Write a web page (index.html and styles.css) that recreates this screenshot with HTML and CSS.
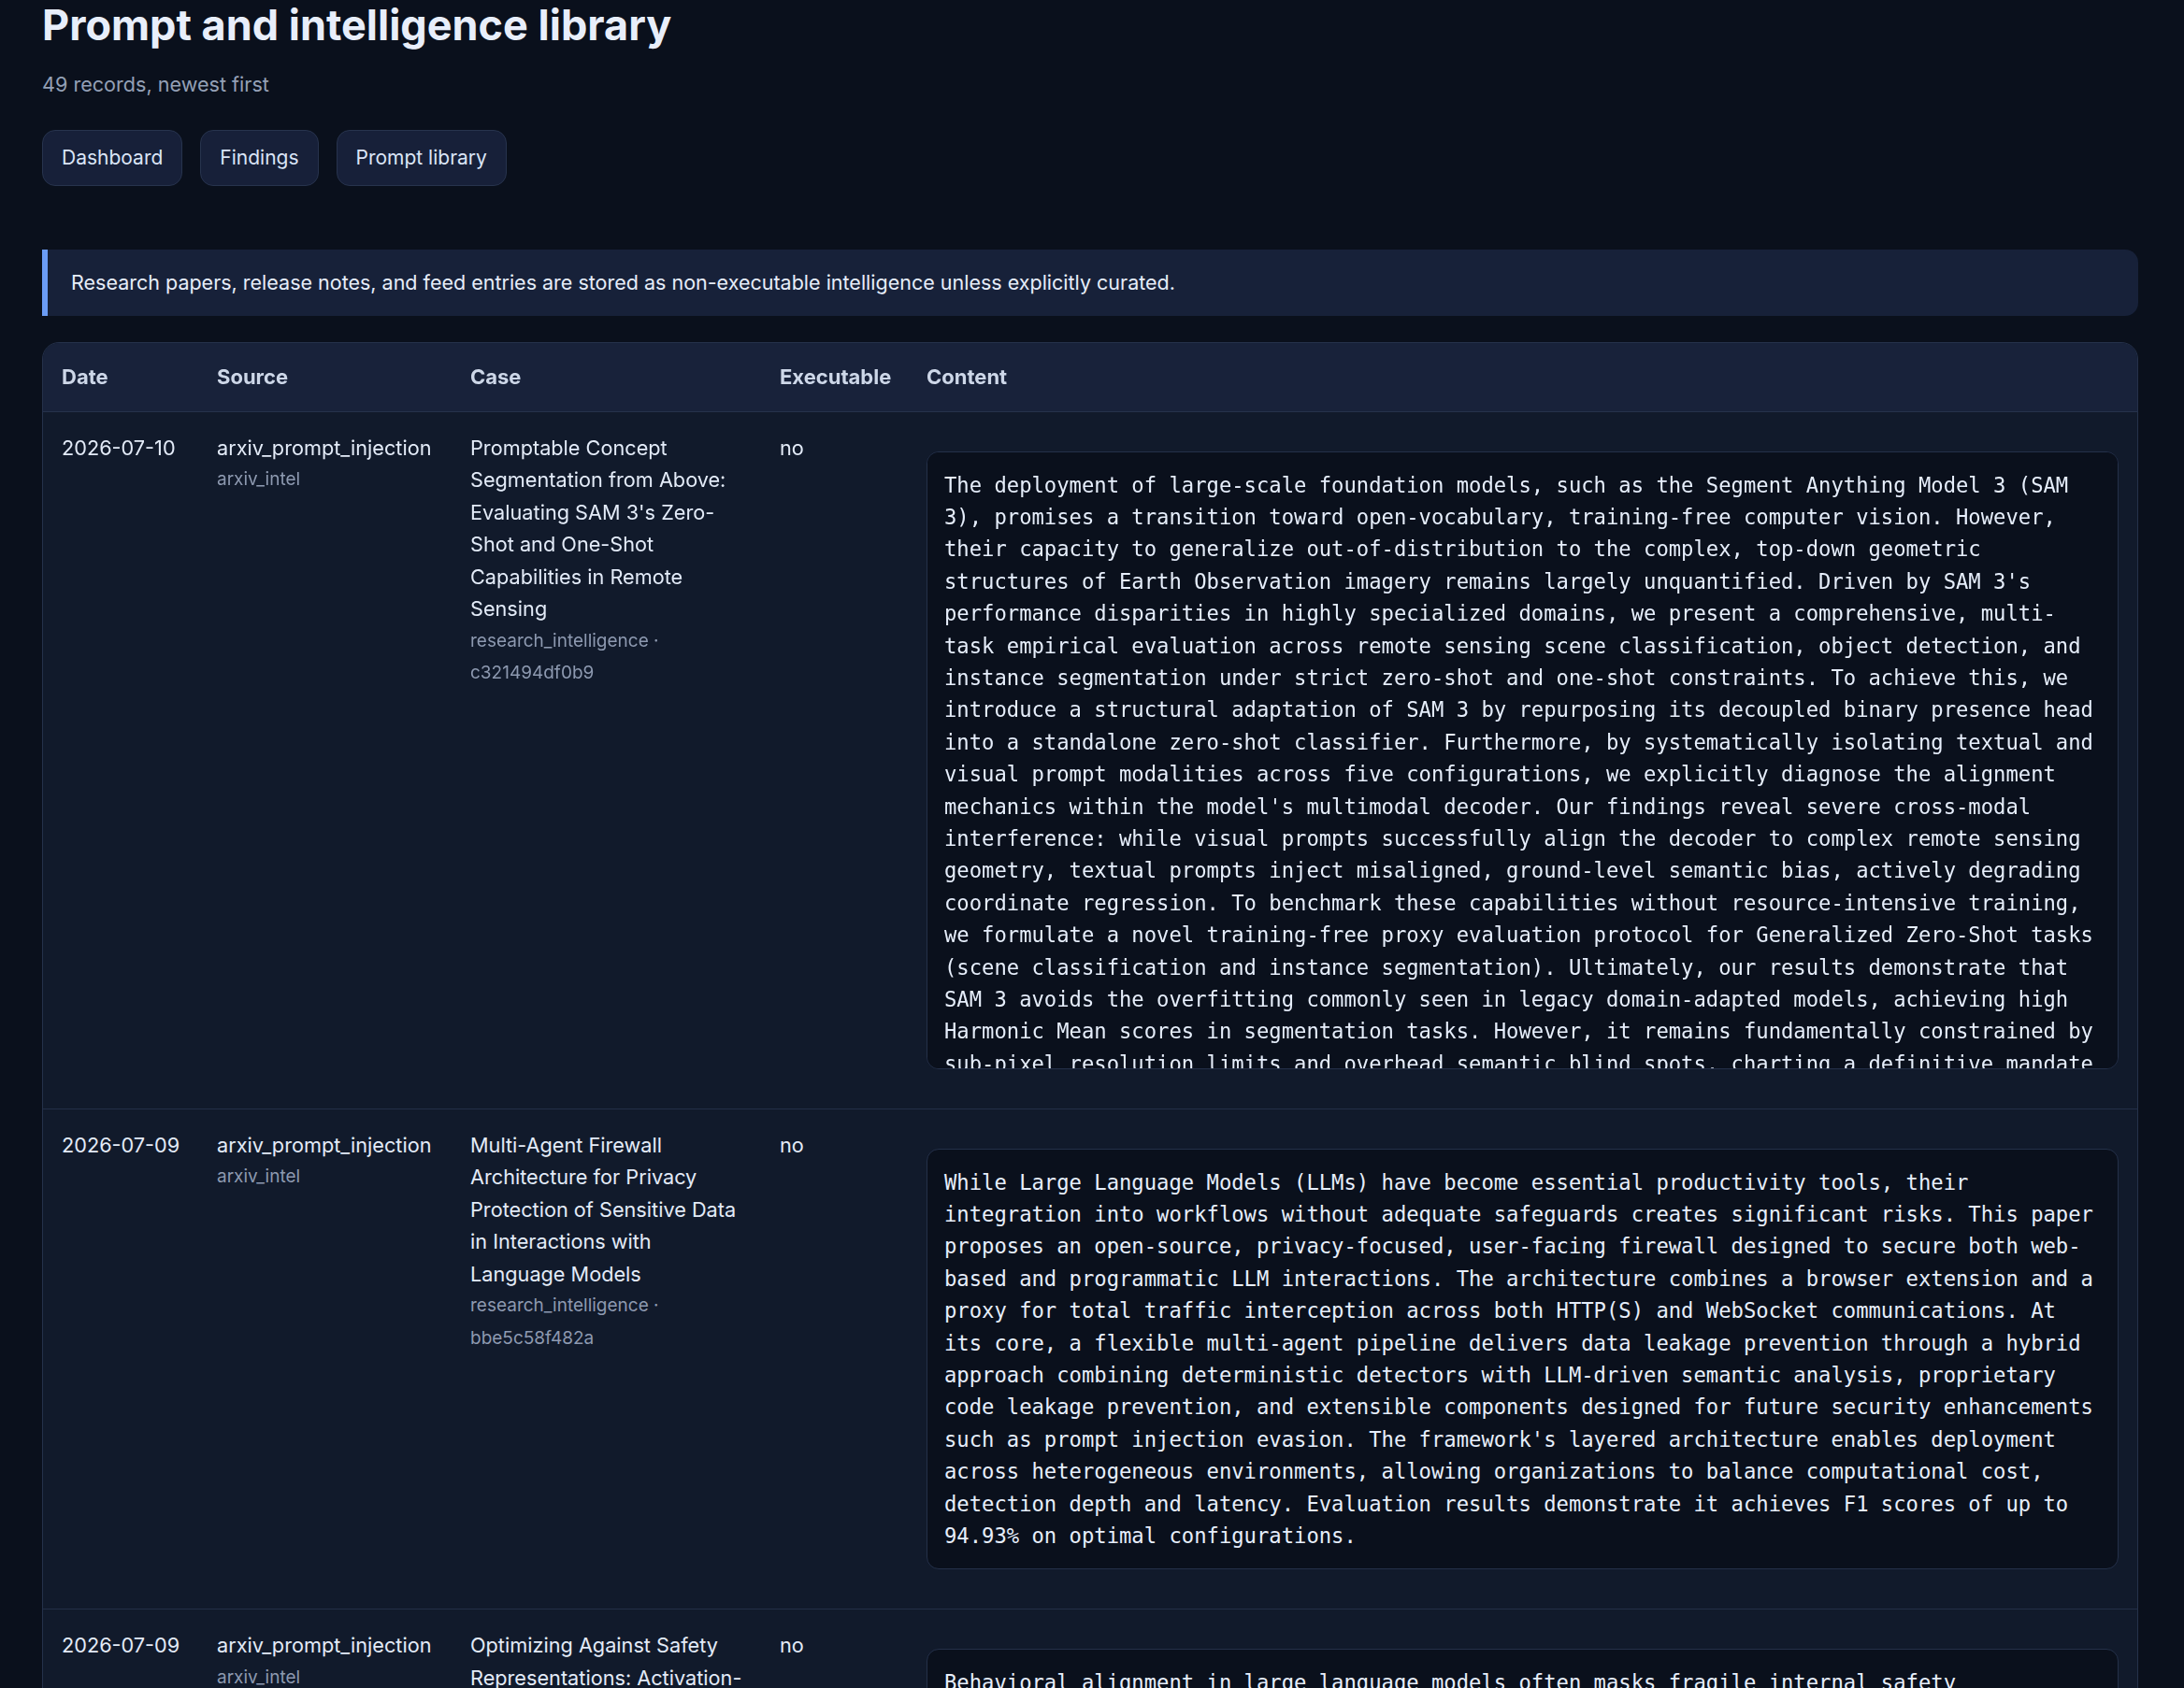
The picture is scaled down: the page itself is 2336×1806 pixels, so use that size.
FILE: index.html
```html
<!DOCTYPE html>
<html lang="en">
<head>
    <meta charset="UTF-8">
    <meta name="viewport" content="width=device-width, initial-scale=1.0">
    <title>Prompt and intelligence library</title>
    <link rel="stylesheet" href="styles.css">
</head>
<body>
    <h1 class="page-title">Prompt and intelligence library</h1>
    <p class="subtitle">49 records, newest first</p>

    <nav class="nav">
        <a class="nav-link" href="#">Dashboard</a>
        <a class="nav-link" href="#">Findings</a>
        <a class="nav-link" href="#">Prompt library</a>
    </nav>

    <div class="notice">Research papers, release notes, and feed entries are stored as non-executable intelligence unless explicitly curated.</div>

    <table class="records">
        <thead>
            <tr>
                <th class="col-date">Date</th>
                <th class="col-source">Source</th>
                <th class="col-case">Case</th>
                <th class="col-exec">Executable</th>
                <th>Content</th>
            </tr>
        </thead>
        <tbody>
            <tr>
                <td class="date">2026-07-10</td>
                <td>arxiv_prompt_injection<span class="sub">arxiv_intel</span></td>
                <td>Promptable Concept Segmentation from Above: Evaluating SAM 3's Zero-Shot and One-Shot Capabilities in Remote Sensing<span class="sub">research_intelligence · c321494df0b9</span></td>
                <td>no</td>
                <td><pre class="content">The deployment of large-scale foundation models, such as the Segment Anything Model 3 (SAM 3), promises a transition toward open-vocabulary, training-free computer vision. However, their capacity to generalize out-of-distribution to the complex, top-down geometric structures of Earth Observation imagery remains largely unquantified. Driven by SAM 3's performance disparities in highly specialized domains, we present a comprehensive, multi-task empirical evaluation across remote sensing scene classification, object detection, and instance segmentation under strict zero-shot and one-shot constraints. To achieve this, we introduce a structural adaptation of SAM 3 by repurposing its decoupled binary presence head into a standalone zero-shot classifier. Furthermore, by systematically isolating textual and visual prompt modalities across five configurations, we explicitly diagnose the alignment mechanics within the model's multimodal decoder. Our findings reveal severe cross-modal interference: while visual prompts successfully align the decoder to complex remote sensing geometry, textual prompts inject misaligned, ground-level semantic bias, actively degrading coordinate regression. To benchmark these capabilities without resource-intensive training, we formulate a novel training-free proxy evaluation protocol for Generalized Zero-Shot tasks (scene classification and instance segmentation). Ultimately, our results demonstrate that SAM 3 avoids the overfitting commonly seen in legacy domain-adapted models, achieving high Harmonic Mean scores in segmentation tasks. However, it remains fundamentally constrained by sub-pixel resolution limits and overhead semantic blind spots, charting a definitive mandate for the next generation of geospatial foundation models.</pre></td>
            </tr>
            <tr>
                <td class="date">2026-07-09</td>
                <td>arxiv_prompt_injection<span class="sub">arxiv_intel</span></td>
                <td>Multi-Agent Firewall Architecture for Privacy Protection of Sensitive Data in Interactions with Language Models<span class="sub">research_intelligence · bbe5c58f482a</span></td>
                <td>no</td>
                <td><pre class="content">While Large Language Models (LLMs) have become essential productivity tools, their integration into workflows without adequate safeguards creates significant risks. This paper proposes an open-source, privacy-focused, user-facing firewall designed to secure both web-based and programmatic LLM interactions. The architecture combines a browser extension and a proxy for total traffic interception across both HTTP(S) and WebSocket communications. At its core, a flexible multi-agent pipeline delivers data leakage prevention through a hybrid approach combining deterministic detectors with LLM-driven semantic analysis, proprietary code leakage prevention, and extensible components designed for future security enhancements such as prompt injection evasion. The framework's layered architecture enables deployment across heterogeneous environments, allowing organizations to balance computational cost, detection depth and latency. Evaluation results demonstrate it achieves F1 scores of up to 94.93% on optimal configurations.</pre></td>
            </tr>
            <tr>
                <td class="date">2026-07-09</td>
                <td>arxiv_prompt_injection<span class="sub">arxiv_intel</span></td>
                <td>Optimizing Against Safety Representations: Activation-Space Attacks on Aligned Language Models<span class="sub">research_intelligence · 7f0a3c1d9b24</span></td>
                <td>no</td>
                <td><pre class="content">Behavioral alignment in large language models often masks fragile internal safety representations. We show that optimizing adversarial inputs directly against these activation-space features yields jailbreaks that transfer across model families.</pre></td>
            </tr>
        </tbody>
    </table>
</body>
</html>
```

FILE: styles.css
```css
body {
    margin: 0;
    padding: 0 49px 40px 45px;
    background-color: #0a101c;
    color: #e3ebf8;
    font-family: Inter, "Noto Sans", sans-serif;
}

.page-title {
    margin: 0;
    font-size: 45px;
    line-height: 53px;
    font-weight: 700;
    color: #e8eefa;
}

.subtitle {
    margin: 22px 0 0;
    font-size: 21.6px;
    line-height: 31.5px;
    color: #94a0b6;
}

.nav {
    display: flex;
    gap: 19px;
    margin-top: 32px;
}

.nav-link {
    padding: 13px 20px;
    border: 1px solid #27334d;
    border-radius: 14px;
    background-color: #172039;
    color: #dbe5f7;
    font-size: 21px;
    line-height: 32px;
    text-decoration: none;
}

.notice {
    margin-top: 68px;
    padding: 20px 25px;
    border-left: 6px solid #6b9cf5;
    border-radius: 0 14px 14px 0;
    background-color: #172139;
    font-size: 21.5px;
    line-height: 31.5px;
    color: #e6edf9;
}

.records {
    width: 100%;
    margin-top: 28px;
    border: 1px solid #25314a;
    border-radius: 18px;
    border-spacing: 0;
    border-collapse: separate;
    table-layout: fixed;
    overflow: hidden;
    background-color: #111a2b;
}

.records th {
    box-sizing: border-box;
    padding: 19px 20px;
    text-align: left;
    font-size: 22px;
    line-height: 34.5px;
    font-weight: 700;
    color: #cdd7e8;
    background-color: #18223a;
    border-bottom: 1px solid #26324b;
}

.col-date { width: 166px; }
.col-source { width: 271px; }
.col-case { width: 331px; }
.col-exec { width: 157px; }

.records td {
    padding: 21px 20px;
    vertical-align: top;
    font-size: 21.7px;
    line-height: 34.5px;
    color: #e3ebf8;
}

.records td.date {
    white-space: nowrap;
}

.records tbody tr + tr td {
    border-top: 1px solid #232f47;
}

.sub {
    display: block;
    font-size: 19px;
    color: #8d99b0;
}

.content {
    box-sizing: border-box;
    max-height: 661px;
    margin: 21px 0;
    padding: 18px;
    overflow: auto;
    scrollbar-width: none;
    border: 1px solid #243049;
    border-radius: 13px;
    background-color: #0a101c;
    color: #e6eefb;
    font-family: "DejaVu Sans Mono", monospace;
    font-size: 22.2px;
    line-height: 34.4px;
    white-space: pre-wrap;
}
```
